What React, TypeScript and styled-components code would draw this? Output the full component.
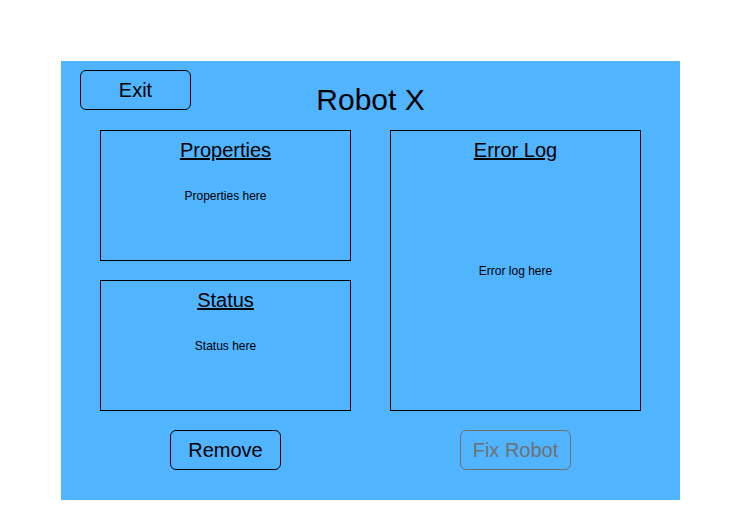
import React from 'react';
import styled, { createGlobalStyle } from 'styled-components';

const GlobalStyle = createGlobalStyle`
  html, body {
    margin: 0;
    padding: 0;
    background: #ffffff;
  }
  body {
    font-family: "Liberation Sans", Arial, sans-serif;
    color: #000;
  }
`;

const Page = styled.div`
  width: 741px;
  height: 531px;
  padding: 61px 0 0 61px;
  box-sizing: border-box;
`;

const Panel = styled.div`
  width: 619px;
  height: 439px;
  background: #50b4ff;
  box-sizing: border-box;
  display: flex;
  flex-direction: column;
`;

const Header = styled.div`
  display: grid;
  grid-template-columns: 1fr auto 1fr;
  align-items: start;
  height: 69px;
  padding: 9px 19px 0;
  box-sizing: border-box;
`;

const Title = styled.h1`
  margin: 13px 0 0;
  font-size: 30px;
  font-weight: normal;
  line-height: 34px;
`;

const Button = styled.button<{ $disabled?: boolean }>`
  width: 111px;
  height: 40px;
  background: transparent;
  border: 1px solid ${(p) => (p.$disabled ? '#707070' : '#000')};
  border-radius: 6px;
  color: ${(p) => (p.$disabled ? '#707070' : '#000')};
  font-family: "Liberation Sans", Arial, sans-serif;
  font-size: 20px;
  padding: 0;
  justify-self: start;
`;

const Content = styled.div`
  display: grid;
  grid-template-columns: 251px 251px;
  grid-template-rows: 131px 131px 40px;
  column-gap: 39px;
  row-gap: 19px;
  padding: 0 39px;
`;

const Box = styled.section<{ $col: number; $rows: string }>`
  border: 1px solid #000;
  box-sizing: border-box;
  display: grid;
  grid-column: ${(p) => p.$col};
  grid-row: ${(p) => p.$rows};
`;

const BoxTitle = styled.h2`
  grid-area: 1 / 1;
  align-self: start;
  justify-self: center;
  margin: 8px 0 0;
  font-size: 20px;
  font-weight: normal;
  line-height: 23px;
  text-decoration: underline;
`;

const BoxBody = styled.p`
  grid-area: 1 / 1;
  align-self: center;
  justify-self: center;
  margin: 0;
  font-size: 12px;
  line-height: 14px;
`;

const ButtonCell = styled.div<{ $col: number }>`
  grid-column: ${(p) => p.$col};
  grid-row: 3;
  display: flex;
  justify-content: center;
`;

export default function App() {
  return (
    <Page>
      <GlobalStyle />
      <Panel>
        <Header>
          <Button>Exit</Button>
          <Title>Robot X</Title>
          <div />
        </Header>
        <Content>
          <Box $col={1} $rows="1">
            <BoxTitle>Properties</BoxTitle>
            <BoxBody>Properties here</BoxBody>
          </Box>
          <Box $col={1} $rows="2">
            <BoxTitle>Status</BoxTitle>
            <BoxBody>Status here</BoxBody>
          </Box>
          <Box $col={2} $rows="1 / span 2">
            <BoxTitle>Error Log</BoxTitle>
            <BoxBody>Error log here</BoxBody>
          </Box>
          <ButtonCell $col={1}>
            <Button>Remove</Button>
          </ButtonCell>
          <ButtonCell $col={2}>
            <Button $disabled>Fix Robot</Button>
          </ButtonCell>
        </Content>
      </Panel>
    </Page>
  );
}
